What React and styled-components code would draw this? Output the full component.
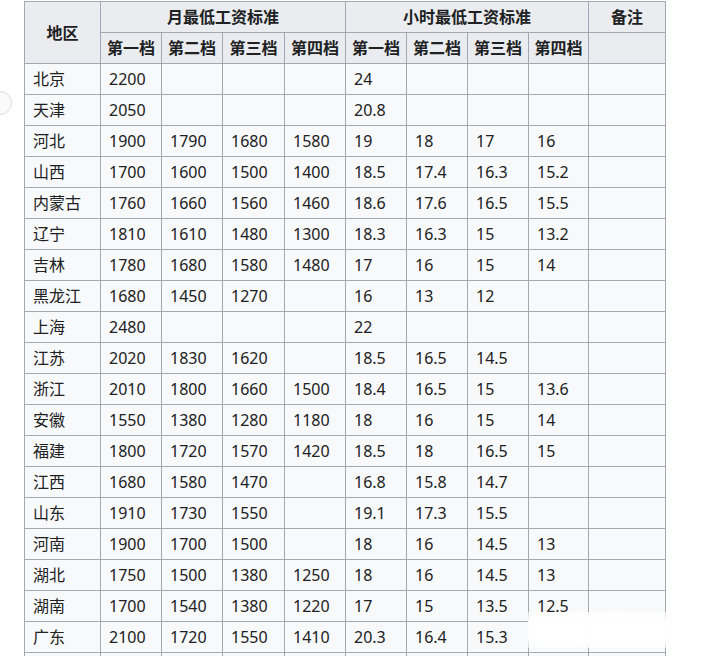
import React from "react";
import styled, { createGlobalStyle } from "styled-components";

const Global = createGlobalStyle`
  html, body { margin: 0; padding: 0; background: #ffffff; }
  body { width: 720px; height: 656px; overflow: hidden; }
`;

const Page = styled.div`
  position: relative;
  width: 720px;
  height: 656px;
  overflow: hidden;
  padding: 1px 0 0 24px;
  box-sizing: border-box;
  background: #fff;
  font-family: "Noto Sans", "Noto Sans CJK SC", sans-serif;
`;

const Table = styled.table`
  border-collapse: collapse;
  table-layout: fixed;
  width: 642px;
  color: #202122;
  font-size: 16px;
`;

const Th = styled.th`
  background: #eaecf0;
  border: 1px solid #a2a9b1;
  height: 30px;
  padding: 0 4px;
  font-weight: 700;
  text-align: center;
  vertical-align: middle;
  line-height: 20px;
  white-space: nowrap;
`;

const Td = styled.td`
  background: #f8f9fa;
  border: 1px solid #a2a9b1;
  height: 30px;
  padding: 0 8px;
  text-align: left;
  vertical-align: middle;
  line-height: 20px;
  white-space: nowrap;
`;

const SideButton = styled.div`
  position: absolute;
  left: -12px;
  top: 91px;
  width: 22px;
  height: 22px;
  border-radius: 50%;
  border: 1.5px solid #dcdcdc;
  background: #fafafa;
`;

const Watermark = styled.div`
  position: absolute;
  left: 528px;
  top: 612px;
  width: 180px;
  height: 36px;
  background: radial-gradient(ellipse at 40% 50%, rgba(255,255,255,0.98) 55%, rgba(255,255,255,0.6) 80%, rgba(255,255,255,0) 100%);
`;

const widths = [76, 61, 61, 62, 61, 61, 61, 61, 60, 77];

const rows = [
  ["北京", "2200", "", "", "", "24", "", "", ""],
  ["天津", "2050", "", "", "", "20.8", "", "", ""],
  ["河北", "1900", "1790", "1680", "1580", "19", "18", "17", "16"],
  ["山西", "1700", "1600", "1500", "1400", "18.5", "17.4", "16.3", "15.2"],
  ["内蒙古", "1760", "1660", "1560", "1460", "18.6", "17.6", "16.5", "15.5"],
  ["辽宁", "1810", "1610", "1480", "1300", "18.3", "16.3", "15", "13.2"],
  ["吉林", "1780", "1680", "1580", "1480", "17", "16", "15", "14"],
  ["黑龙江", "1680", "1450", "1270", "", "16", "13", "12", ""],
  ["上海", "2480", "", "", "", "22", "", "", ""],
  ["江苏", "2020", "1830", "1620", "", "18.5", "16.5", "14.5", ""],
  ["浙江", "2010", "1800", "1660", "1500", "18.4", "16.5", "15", "13.6"],
  ["安徽", "1550", "1380", "1280", "1180", "18", "16", "15", "14"],
  ["福建", "1800", "1720", "1570", "1420", "18.5", "18", "16.5", "15"],
  ["江西", "1680", "1580", "1470", "", "16.8", "15.8", "14.7", ""],
  ["山东", "1910", "1730", "1550", "", "19.1", "17.3", "15.5", ""],
  ["河南", "1900", "1700", "1500", "", "18", "16", "14.5", "13"],
  ["湖北", "1750", "1500", "1380", "1250", "18", "16", "14.5", "13"],
  ["湖南", "1700", "1540", "1380", "1220", "17", "15", "13.5", "12.5"],
  ["广东", "2100", "1720", "1550", "1410", "20.3", "16.4", "15.3", ""],
  ["", "", "", "", "", "", "", "", ""],
];

const tiers = ["第一档", "第二档", "第三档", "第四档"];

export default function App() {
  return (
    <>
      <Global />
      <Page>
        <Table>
          <colgroup>
            {widths.map((w, i) => (
              <col key={i} style={{ width: w }} />
            ))}
          </colgroup>
          <thead>
            <tr>
              <Th rowSpan={2}>地区</Th>
              <Th colSpan={4}>月最低工资标准</Th>
              <Th colSpan={4}>小时最低工资标准</Th>
              <Th>备注</Th>
            </tr>
            <tr>
              {tiers.map((t) => (
                <Th key={"m" + t}>{t}</Th>
              ))}
              {tiers.map((t) => (
                <Th key={"h" + t}>{t}</Th>
              ))}
              <Th />
            </tr>
          </thead>
          <tbody>
            {rows.map((r, i) => (
              <tr key={i}>
                {r.map((c, j) => (
                  <Td key={j}>{c}</Td>
                ))}
                <Td />
              </tr>
            ))}
          </tbody>
        </Table>
        <SideButton />
        <Watermark />
      </Page>
    </>
  );
}
